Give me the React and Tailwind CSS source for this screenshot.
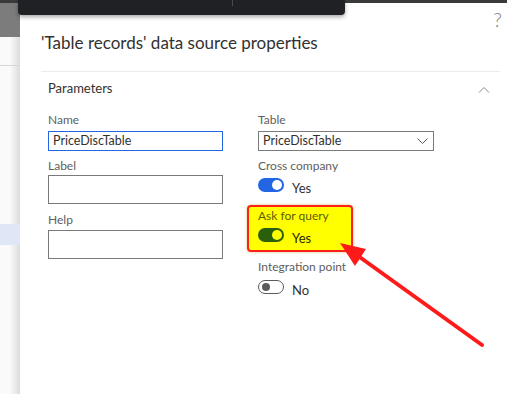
import React from 'react';

const font = { fontFamily: 'Lato, "Noto Sans", sans-serif' };

const Label = ({ children, className = '' }) => (
  <div className={`h-[16px] text-[12px] leading-[16px] text-[#605e5c] ${className}`}>{children}</div>
);

const Toggle = ({ on, className = '', knob = 'bg-white' }) =>
  on ? (
    <div className={`flex h-[14px] w-[26px] shrink-0 items-center justify-end rounded-full pr-[2px] ${className}`}>
      <div className={`h-[10px] w-[10px] rounded-full ${knob}`} />
    </div>
  ) : (
    <div className="flex h-[14px] w-[26px] shrink-0 items-center rounded-full border border-[#5b5b5b] pl-[3px]">
      <div className="h-[8px] w-[8px] rounded-full bg-[#5b5b5b]" />
    </div>
  );

export default function App() {
  return (
    <div className="relative flex h-[394px] w-[507px] flex-col overflow-hidden bg-white" style={font}>
      {/* top app bar */}
      <div className="h-[3px] w-full bg-[#3a3a3a]" />

      <div className="flex flex-1">
        {/* page behind the panel */}
        <div className="flex w-[20px] flex-col bg-gradient-to-r from-[#fafafa] from-50% to-[#dcdcdc]">
          <div className="h-[34px] bg-[#7c7c7c]" />
          <div className="h-[28px]" />
          <div className="h-px bg-[#d6d6d6]" />
          <div className="h-[158px]" />
          <div className="h-[21px] bg-[#dfe6f5]" />
        </div>

        {/* properties panel */}
        <div className="flex flex-1 flex-col pl-[21px] pr-[7px] text-[#323130]">
          <div className="flex h-[28px] justify-end pt-[6px]">
            <span className="-mr-[2px] text-[20px] font-light leading-[20px] text-[#7a7a7a]">?</span>
          </div>
          <h1 className="h-[24px] text-[17px] leading-[24px] text-[#323130]">
            'Table records' data source properties
          </h1>
          <div className="mt-[16px] h-px bg-[#edebe9]" />

          <div className="flex h-[34px] items-center justify-between pl-[7px] pr-[10px]">
            <span className="text-[13px]">Parameters</span>
            <svg width="12" height="7" viewBox="0 0 12 7" fill="none" stroke="#8a8886" strokeWidth="1">
              <path d="M1 6.5 L6 1.5 L11 6.5" />
            </svg>
          </div>

          <div className="mt-[6px] flex gap-[35px] pl-[7px]">
            {/* left column */}
            <div className="flex w-[175px] flex-col">
              <Label>Name</Label>
              <div className="mt-[3px] flex h-[20px] items-center border border-[#2266e3] px-[4px] text-[12.5px] leading-[18px]">
                PriceDiscTable
              </div>
              <Label className="mt-[7px]">Label</Label>
              <div className="mt-[1px] h-[29px] border border-[#7a7a7a]" />
              <Label className="mt-[8px]">Help</Label>
              <div className="mt-[2px] h-[29px] border border-[#7a7a7a]" />
            </div>

            {/* right column */}
            <div className="flex w-[176px] flex-col">
              <Label>Table</Label>
              <div className="mt-[3px] flex h-[20px] items-center justify-between border border-[#7a7a7a] pl-[4px] pr-[5px] text-[12.5px] leading-[18px]">
                <span>PriceDiscTable</span>
                <svg width="11" height="6" viewBox="0 0 11 6" fill="none" stroke="#605e5c" strokeWidth="1">
                  <path d="M0.5 0.5 L5.5 5.5 L10.5 0.5" />
                </svg>
              </div>

              <Label className="mt-[7px]">Cross company</Label>
              <div className="mt-[4px] flex items-start gap-[8px]">
                <Toggle on className="bg-[#2266e3]" />
                <span className="mt-[2px] text-[13px] leading-[16px]">Yes</span>
              </div>

              <div className="-ml-[11px] mt-[9px] flex h-[47px] w-[106px] flex-col rounded-[4px] border-2 border-[#ff1f1f] bg-[#ffff00] pl-[9px] pt-[1px] shadow-[0_0_3px_rgba(180,160,0,0.6)]">
                <Label className="!text-[#5e5e00]">Ask for query</Label>
                <div className="mt-[4px] flex items-start gap-[8px]">
                  <Toggle on className="bg-[#2a5f0b]" knob="bg-[#ffff00]" />
                  <span className="mt-[2px] text-[13px] leading-[16px] text-[#2a2a00]">Yes</span>
                </div>
              </div>

              <Label className="mt-[7px]">Integration point</Label>
              <div className="mt-[5px] flex items-start gap-[8px]">
                <Toggle />
                <span className="mt-[2px] text-[13px] leading-[16px]">No</span>
              </div>
            </div>
          </div>
        </div>
      </div>

      {/* dark flyout peeking from the top */}
      <div className="absolute left-[18px] top-0 flex h-[15px] w-[327px] rounded-b-[4px] bg-[#202124] shadow-[0_2px_4px_rgba(0,0,0,0.35)]">
        <div className="ml-[214px] h-[6px] w-px bg-[#4a4a4a]" />
      </div>

      {/* annotation arrow */}
      <svg className="absolute left-0 top-0" width="507" height="394" viewBox="0 0 507 394">
        <line x1="482" y1="345" x2="354" y2="253" stroke="#ff1a1a" strokeWidth="4" strokeLinecap="round" />
        <polygon points="340,243 366,249 355,266" fill="#ff1a1a" />
      </svg>
    </div>
  );
}
